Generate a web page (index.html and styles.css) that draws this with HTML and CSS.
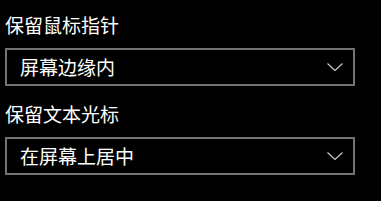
FILE: index.html
```html
<!DOCTYPE html>
<html lang="zh-CN">
<head>
    <meta charset="UTF-8">
    <title>鼠标指针</title>
    <link rel="stylesheet" href="styles.css">
</head>
<body>
    <div class="panel">
        <div class="field">
            <div class="field-label">保留鼠标指针</div>
            <div class="combo">
                <span class="combo-text">屏幕边缘内</span>
                <svg class="chevron" width="16" height="8" viewBox="0 0 16 8">
                    <polyline points="0.5,0.5 8,7.5 15.5,0.5" fill="none" stroke="#c8c8c8" stroke-width="1.2"/>
                </svg>
            </div>
        </div>

        <div class="field">
            <div class="field-label">保留文本光标</div>
            <div class="combo">
                <span class="combo-text">在屏幕上居中</span>
                <svg class="chevron" width="16" height="8" viewBox="0 0 16 8">
                    <polyline points="0.5,0.5 8,7.5 15.5,0.5" fill="none" stroke="#c8c8c8" stroke-width="1.2"/>
                </svg>
            </div>
        </div>
    </div>
</body>
</html>
```

FILE: styles.css
```css
* {
    margin: 0;
    padding: 0;
    box-sizing: border-box;
}

body {
    background: #000;
    color: #fff;
    font-family: "Noto Sans CJK SC", "Noto Sans", sans-serif;
    font-size: 19px;
}

/* Panneau principal */
.panel {
    padding: 12px 0 0 5px;
    width: 355px;
}

.field {
    margin-bottom: 15px;
}

.field-label {
    line-height: 26px;
    margin-bottom: 10px;
}

/* Liste déroulante */
.combo {
    height: 38px;
    border: 2px solid #737373;
    display: flex;
    align-items: center;
    justify-content: space-between;
    padding: 0 10px 0 13px;
}

.combo-text {
    line-height: 20px;
}

.chevron {
    display: block;
}
```
